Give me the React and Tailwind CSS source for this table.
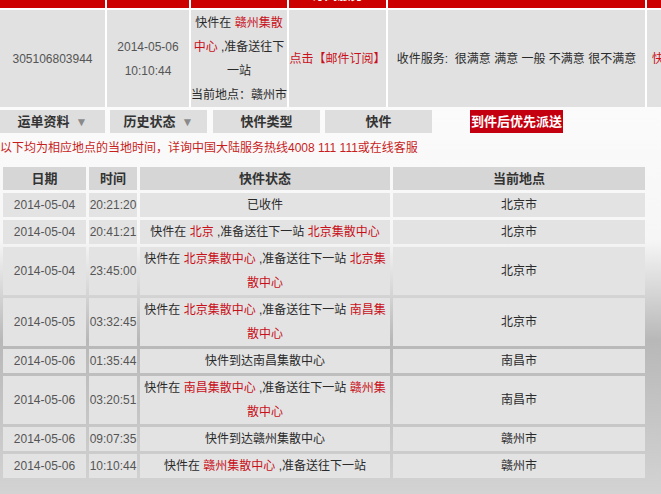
import React from 'react';

const RED = 'text-[#c8101a]';

const history = [
  { date: '2014-05-04', time: '20:21:20', status: [['已收件']], place: '北京市' },
  { date: '2014-05-04', time: '20:41:21', status: [['快件在 '], ['北京', 1], [' ,准备送往下一站 '], ['北京集散中心', 1]], place: '北京市' },
  { date: '2014-05-04', time: '23:45:00', status: [['快件在 '], ['北京集散中心', 1], [' ,准备送往下一站 '], ['北京集散中心', 1]], place: '北京市' },
  { date: '2014-05-05', time: '03:32:45', status: [['快件在 '], ['北京集散中心', 1], [' ,准备送往下一站 '], ['南昌集散中心', 1]], place: '北京市' },
  { date: '2014-05-06', time: '01:35:44', status: [['快件到达南昌集散中心']], place: '南昌市' },
  { date: '2014-05-06', time: '03:20:51', status: [['快件在 '], ['南昌集散中心', 1], [' ,准备送往下一站 '], ['赣州集散中心', 1]], place: '南昌市' },
  { date: '2014-05-06', time: '09:07:35', status: [['快件到达赣州集散中心']], place: '赣州市' },
  { date: '2014-05-06', time: '10:10:44', status: [['快件在 '], ['赣州集散中心', 1], [' ,准备送往下一站']], place: '赣州市' },
];

function Status({ parts }) {
  return parts.map(([text, red], i) => (
    <span key={i} className={red ? RED : ''}>{text}</span>
  ));
}

export default function App() {
  return (
    <div className="w-[661px] h-[494px] overflow-hidden font-['Liberation_Sans','Noto_Sans_CJK_SC',sans-serif] text-[12px] text-[#2a2a2a] bg-[linear-gradient(to_bottom,#ffffff_0px,#f6f6f6_240px,#b8b8b8_340px,#c6c6c6_420px,#d3d3d3_494px)]">
      {/* waybill summary, scrolled so only the bottom of the header shows */}
      <div className="-mt-[22px] w-[800px] bg-white">
        <div className="flex gap-[2px] h-[30px]">
          <div className="w-[105px] bg-[#cc0000]" />
          <div className="w-[82px] bg-[#cc0000]" />
          <div className="w-[96px] bg-[#cc0000]" />
          <div className="w-[97px] bg-[#cc0000] flex items-end justify-center pb-[6px] leading-[14px] text-[13px] font-bold text-white">订阅服务</div>
          <div className="w-[257px] bg-[#cc0000]" />
          <div className="w-[150px] bg-[#cc0000]" />
        </div>
        <div className="flex gap-[2px] mt-[2px] h-[97px] leading-[24px]">
          <div className="w-[105px] bg-[#e1e1e1] flex items-center justify-center text-[#555]">305106803944</div>
          <div className="w-[82px] bg-[#e1e1e1] flex items-center justify-center text-center text-[#555]">
            2014-05-06<br />10:10:44
          </div>
          <div className="w-[96px] bg-[#e1e1e1] flex items-center justify-center text-center whitespace-nowrap">
            <div>
              快件在 <span className={RED}>赣州集散</span><br />
              <span className={RED}>中心</span> ,准备送往下<br />
              一站<br />
              当前地点：赣州市
            </div>
          </div>
          <div className={`w-[97px] bg-[#e1e1e1] flex items-center justify-center whitespace-nowrap ${RED}`}>点击【邮件订阅】</div>
          <div className="w-[257px] bg-[#e1e1e1] flex items-center justify-center whitespace-nowrap">
            收件服务:&nbsp; 很满意 满意 一般 不满意 很不满意
          </div>
          <div className={`w-[150px] bg-[#e1e1e1] flex items-center pl-[5px] ${RED}`}>快递员评价</div>
        </div>
      </div>

      {/* tabs */}
      <div className="flex items-center mt-[3px] h-[23px] text-[13px] font-bold text-[#333]">
        <div className="w-[105px] h-full bg-[#dedede] flex items-center justify-center gap-[6px]">
          运单资料 <span className="text-[12px] text-[#8a8a8a]">▼</span>
        </div>
        <div className="w-[97px] ml-[5px] h-full bg-[#dedede] flex items-center justify-center gap-[6px]">
          历史状态 <span className="text-[12px] text-[#8a8a8a]">▼</span>
        </div>
        <div className="w-[107px] ml-[6px] h-full bg-[#dedede] flex items-center justify-center">快件类型</div>
        <div className="w-[107px] ml-[5px] h-full bg-[#dedede] flex items-center justify-center">快件</div>
        <div className="ml-[38px] w-[93px] h-full bg-[#c40010] text-white flex items-center justify-center">到件后优先派送</div>
      </div>

      {/* notice */}
      <div className="h-[31px] leading-[31px] text-[#c81d1d] whitespace-nowrap">
        以下均为相应地点的当地时间，详询中国大陆服务热线4008 111 111或在线客服
      </div>

      {/* history */}
      <table className="border-separate border-spacing-[3px] w-[648px] leading-[24px] text-center">
        <colgroup>
          <col className="w-[83px]" />
          <col className="w-[48px]" />
          <col className="w-[250px]" />
          <col className="w-[252px]" />
        </colgroup>
        <thead>
          <tr className="h-[23px] text-[13px] font-bold text-[#333]">
            <th className="bg-[#d6d6d6] p-0 leading-[23px]">日期</th>
            <th className="bg-[#d6d6d6] p-0 leading-[23px]">时间</th>
            <th className="bg-[#d6d6d6] p-0 leading-[23px]">快件状态</th>
            <th className="bg-[#d6d6d6] p-0 leading-[23px]">当前地点</th>
          </tr>
        </thead>
        <tbody>
          {history.map((r, i) => (
            <tr key={i}>
              <td className="bg-[#e3e3e3] p-0 text-[#555] whitespace-nowrap">{r.date}</td>
              <td className="bg-[#e3e3e3] p-0 text-[#555] whitespace-nowrap">{r.time}</td>
              <td className="bg-[#e3e3e3] p-0"><Status parts={r.status} /></td>
              <td className="bg-[#e3e3e3] p-0">{r.place}</td>
            </tr>
          ))}
        </tbody>
      </table>
    </div>
  );
}
